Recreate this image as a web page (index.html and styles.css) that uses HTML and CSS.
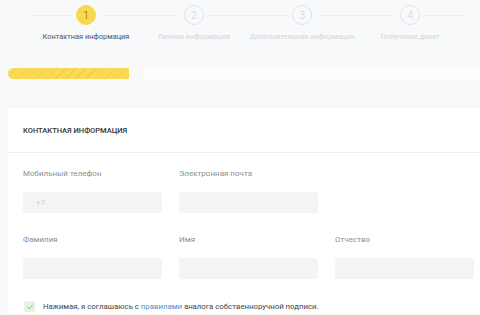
FILE: index.html
```html
<!DOCTYPE html>
<html lang="ru">
<head>
<meta charset="utf-8">
<link rel="stylesheet" href="styles.css">
</head>
<body>
<div class="stepper">
  <div class="step active"><div class="circle">1</div><div class="step-label">Контактная информация</div></div>
  <div class="step"><div class="circle">2</div><div class="step-label">Личная информация</div></div>
  <div class="step"><div class="circle">3</div><div class="step-label">Дополнительная информация</div></div>
  <div class="step"><div class="circle">4</div><div class="step-label">Получение денег</div></div>
</div>
<div class="progress">
  <div class="progress-fill"></div>
  <div class="progress-track"></div>
</div>
<div class="card">
  <div class="card-header">Контактная информация</div>
  <div class="card-body">
    <div class="form-grid">
      <div class="field"><div class="label">Мобильный телефон</div><div class="input"><span class="placeholder">+7</span></div></div>
      <div class="field"><div class="label">Электронная почта</div><div class="input"></div></div>
      <div class="field empty"></div>
      <div class="field"><div class="label">Фамилия</div><div class="input"></div></div>
      <div class="field"><div class="label">Имя</div><div class="input"></div></div>
      <div class="field"><div class="label">Отчество</div><div class="input"></div></div>
    </div>
    <div class="agree">
      <span class="checkbox"><svg viewBox="0 0 12 12" width="8" height="8"><path d="M2.5 6.2 L5 8.5 L9.5 3.5" fill="none" stroke="#5bbf5f" stroke-width="1.4" stroke-linecap="round" stroke-linejoin="round"/></svg></span>
      <span class="agree-text">Нажимая, я соглашаюсь с <a class="link">правилами</a> аналога собственноручной подписи.</span>
    </div>
  </div>
</div>
</body>
</html>
```
FILE: styles.css
```css
* { box-sizing: border-box; }
html, body { margin: 0; padding: 0; }
body {
  background: #f8f9fb;
  font-family: Roboto, "Liberation Sans", sans-serif;
  width: 480px;
  height: 315px;
  overflow: hidden;
}
.stepper {
  display: flex;
  margin-left: 32px;
  width: 432px;
  height: 68px;
  position: relative;
  padding-top: 5px;
}
.stepper::before {
  content: "";
  position: absolute;
  left: 1px;
  right: 1px;
  top: 15px;
  height: 1px;
  background: #eceef1;
}
.step {
  width: 108px;
  display: flex;
  flex-direction: column;
  align-items: center;
  position: relative;
}
.circle {
  width: 20px;
  height: 20px;
  border-radius: 50%;
  border: 1px solid #e1e2e5;
  background: #f8f9fb;
  box-shadow: 0 0 0 5px #f8f9fb;
  color: #d0d2d6;
  font-size: 11px;
  font-weight: 300;
  display: flex;
  align-items: center;
  justify-content: center;
}
.step.active .circle {
  background: #f8d94e;
  border-color: #f8d94e;
  color: #7a6a20;
}
.step-label {
  margin-top: 7px;
  font-size: 7.4px;
  line-height: 10px;
  color: #d3d5d9;
  white-space: nowrap;
}
.step.active .step-label { color: #555; }
.progress {
  display: flex;
  height: 11px;
  margin-left: 8px;
  gap: 14px;
}
.progress-fill {
  width: 121px;
  border-radius: 6px 0 0 6px;
  background: repeating-linear-gradient(135deg, #f8da55 0 6px, #f1cf45 6px 7px);
}
.progress-track {
  flex: 1;
  background: #fdfdfe;
}
.card {
  margin: 29px 0 0 8px;
  background: #ffffff;
  height: 220px;
}
.card-header {
  height: 45px;
  padding-left: 15px;
  display: flex;
  align-items: center;
  font-size: 7.5px;
  font-weight: 500;
  text-transform: uppercase;
  color: #333;
  border-bottom: 1px solid #eeeff1;
}
.card-body {
  padding: 16px 0 0 15px;
}
.form-grid {
  display: grid;
  grid-template-columns: 139px 139px 139px;
  column-gap: 17px;
  row-gap: 22px;
}
.label {
  font-size: 8px;
  line-height: 10px;
  color: #8d8f93;
  margin-bottom: 13px;
}
.input {
  height: 21px;
  background: #f4f4f5;
  border-radius: 3px;
  display: flex;
  align-items: center;
  padding-left: 13px;
}
.placeholder {
  font-size: 8px;
  color: #c9cacd;
}
.agree {
  display: flex;
  align-items: center;
  margin-top: 22px;
}
.checkbox {
  width: 11px;
  height: 11px;
  border-radius: 2px;
  background: #e4f4e3;
  display: flex;
  align-items: center;
  justify-content: center;
  margin-left: 1px;
}
.agree-text {
  margin-left: 8px;
  font-size: 7.8px;
  color: #444;
}
.link { color: #4b8fc8; }
```
